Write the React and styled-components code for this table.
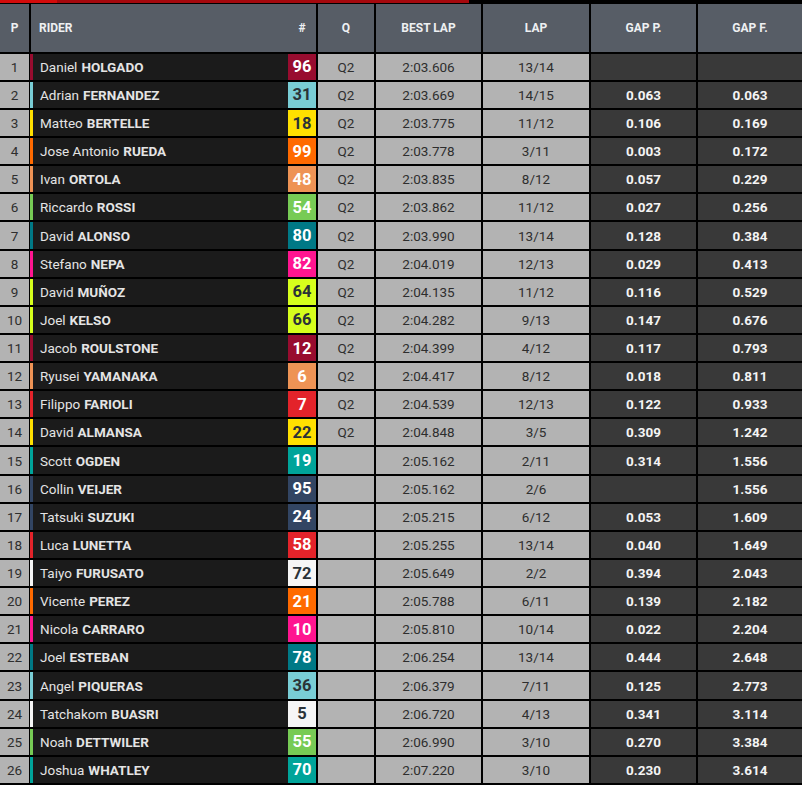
import React from "react";
import styled, { createGlobalStyle } from "styled-components";

const Global = createGlobalStyle`
  html, body { margin: 0; padding: 0; background: #000; }
  body { font-family: Roboto, "Liberation Sans", sans-serif; }
`;

const Page = styled.div`
  width: 802px;
  background: #000;
`;

const TopBar = styled.div`
  height: 3px;
  margin-bottom: 1px;
  background: linear-gradient(to right, #d40b0b 0, #d40b0b 57px, #a5080d 57px, #a5080d 469px, #000 469px);
`;

const Grid = styled.div`
  display: grid;
  grid-template-columns: 29px 285px 56px 105px 106px 105px 1fr;
  grid-template-rows: 47.7px;
  grid-auto-rows: 26.14px;
  column-gap: 2px;
  row-gap: 2px;
`;

const Head = styled.div`
  background: #575d66;
  color: #eef0f2;
  font-weight: 700;
  font-size: 12px;
  display: flex;
  align-items: center;
  justify-content: ${(p) => (p.$left ? "space-between" : "center")};
  padding: ${(p) => (p.$left ? "0 7px 0 8px" : "0")};
`;

const HashLabel = styled.span`
  width: 14px;
  text-align: center;
`;

const LightCell = styled.div`
  background: #b3b3b3;
  color: #2e2e2e;
  font-size: 13.5px;
  display: flex;
  align-items: center;
  justify-content: center;
`;

const GapCell = styled.div`
  background: #393939;
  color: #f4f4f4;
  font-weight: 700;
  font-size: 13.5px;
  display: flex;
  align-items: center;
  justify-content: center;
`;

const RiderCell = styled.div`
  background: #1b1b1b;
  border-left: 3px solid ${(p) => p.$color};
  margin-left: -1px;
  display: flex;
  align-items: stretch;
`;

const Name = styled.div`
  flex: 1;
  color: #e4e4e4;
  font-size: 13.5px;
  padding-left: 7px;
  display: flex;
  align-items: center;
  white-space: nowrap;
  b { font-weight: 700; margin-left: 4px; }
`;

const Badge = styled.div`
  width: 28px;
  background: ${(p) => p.$color};
  color: ${(p) => (p.$dark ? "#2b3338" : "#ffffff")};
  font-weight: 700;
  font-size: 16.5px;
  display: flex;
  align-items: center;
  justify-content: center;
`;

const C = {
  maroon: ["#980c2f", false],
  cyan: ["#79cdd5", true],
  yellow: ["#ffe000", true],
  orange: ["#ff6a00", false],
  peach: ["#ee9355", false],
  green: ["#77cb55", false],
  tealDark: ["#007986", false],
  pink: ["#ff1590", false],
  lime: ["#d6ff1c", true],
  red: ["#e3232a", false],
  teal: ["#00a49a", false],
  navy: ["#324563", false],
  white: ["#f6f6f6", true],
};

const rows = [
  ["Daniel", "HOLGADO", "96", "maroon", "Q2", "2:03.606", "13/14", "", ""],
  ["Adrian", "FERNANDEZ", "31", "cyan", "Q2", "2:03.669", "14/15", "0.063", "0.063"],
  ["Matteo", "BERTELLE", "18", "yellow", "Q2", "2:03.775", "11/12", "0.106", "0.169"],
  ["Jose Antonio", "RUEDA", "99", "orange", "Q2", "2:03.778", "3/11", "0.003", "0.172"],
  ["Ivan", "ORTOLA", "48", "peach", "Q2", "2:03.835", "8/12", "0.057", "0.229"],
  ["Riccardo", "ROSSI", "54", "green", "Q2", "2:03.862", "11/12", "0.027", "0.256"],
  ["David", "ALONSO", "80", "tealDark", "Q2", "2:03.990", "13/14", "0.128", "0.384"],
  ["Stefano", "NEPA", "82", "pink", "Q2", "2:04.019", "12/13", "0.029", "0.413"],
  ["David", "MUÑOZ", "64", "lime", "Q2", "2:04.135", "11/12", "0.116", "0.529"],
  ["Joel", "KELSO", "66", "lime", "Q2", "2:04.282", "9/13", "0.147", "0.676"],
  ["Jacob", "ROULSTONE", "12", "maroon", "Q2", "2:04.399", "4/12", "0.117", "0.793"],
  ["Ryusei", "YAMANAKA", "6", "peach", "Q2", "2:04.417", "8/12", "0.018", "0.811"],
  ["Filippo", "FARIOLI", "7", "red", "Q2", "2:04.539", "12/13", "0.122", "0.933"],
  ["David", "ALMANSA", "22", "yellow", "Q2", "2:04.848", "3/5", "0.309", "1.242"],
  ["Scott", "OGDEN", "19", "teal", "", "2:05.162", "2/11", "0.314", "1.556"],
  ["Collin", "VEIJER", "95", "navy", "", "2:05.162", "2/6", "", "1.556"],
  ["Tatsuki", "SUZUKI", "24", "navy", "", "2:05.215", "6/12", "0.053", "1.609"],
  ["Luca", "LUNETTA", "58", "red", "", "2:05.255", "13/14", "0.040", "1.649"],
  ["Taiyo", "FURUSATO", "72", "white", "", "2:05.649", "2/2", "0.394", "2.043"],
  ["Vicente", "PEREZ", "21", "orange", "", "2:05.788", "6/11", "0.139", "2.182"],
  ["Nicola", "CARRARO", "10", "pink", "", "2:05.810", "10/14", "0.022", "2.204"],
  ["Joel", "ESTEBAN", "78", "tealDark", "", "2:06.254", "13/14", "0.444", "2.648"],
  ["Angel", "PIQUERAS", "36", "cyan", "", "2:06.379", "7/11", "0.125", "2.773"],
  ["Tatchakom", "BUASRI", "5", "white", "", "2:06.720", "4/13", "0.341", "3.114"],
  ["Noah", "DETTWILER", "55", "green", "", "2:06.990", "3/10", "0.270", "3.384"],
  ["Joshua", "WHATLEY", "70", "teal", "", "2:07.220", "3/10", "0.230", "3.614"],
];

export default function App() {
  return (
    <Page>
      <Global />
      <TopBar />
      <Grid>
        <Head>P</Head>
        <Head $left>
          <span>RIDER</span>
          <HashLabel>#</HashLabel>
        </Head>
        <Head>Q</Head>
        <Head>BEST LAP</Head>
        <Head>LAP</Head>
        <Head>GAP P.</Head>
        <Head>GAP F.</Head>
        {rows.map((r, i) => {
          const [first, last, num, col, q, best, lap, gp, gf] = r;
          const [color, dark] = C[col];
          return (
            <React.Fragment key={i}>
              <LightCell>{i + 1}</LightCell>
              <RiderCell $color={color}>
                <Name>
                  {first}
                  <b>{last}</b>
                </Name>
                <Badge $color={color} $dark={dark}>
                  {num}
                </Badge>
              </RiderCell>
              <LightCell>{q}</LightCell>
              <LightCell>{best}</LightCell>
              <LightCell>{lap}</LightCell>
              <GapCell>{gp}</GapCell>
              <GapCell>{gf}</GapCell>
            </React.Fragment>
          );
        })}
      </Grid>
    </Page>
  );
}
